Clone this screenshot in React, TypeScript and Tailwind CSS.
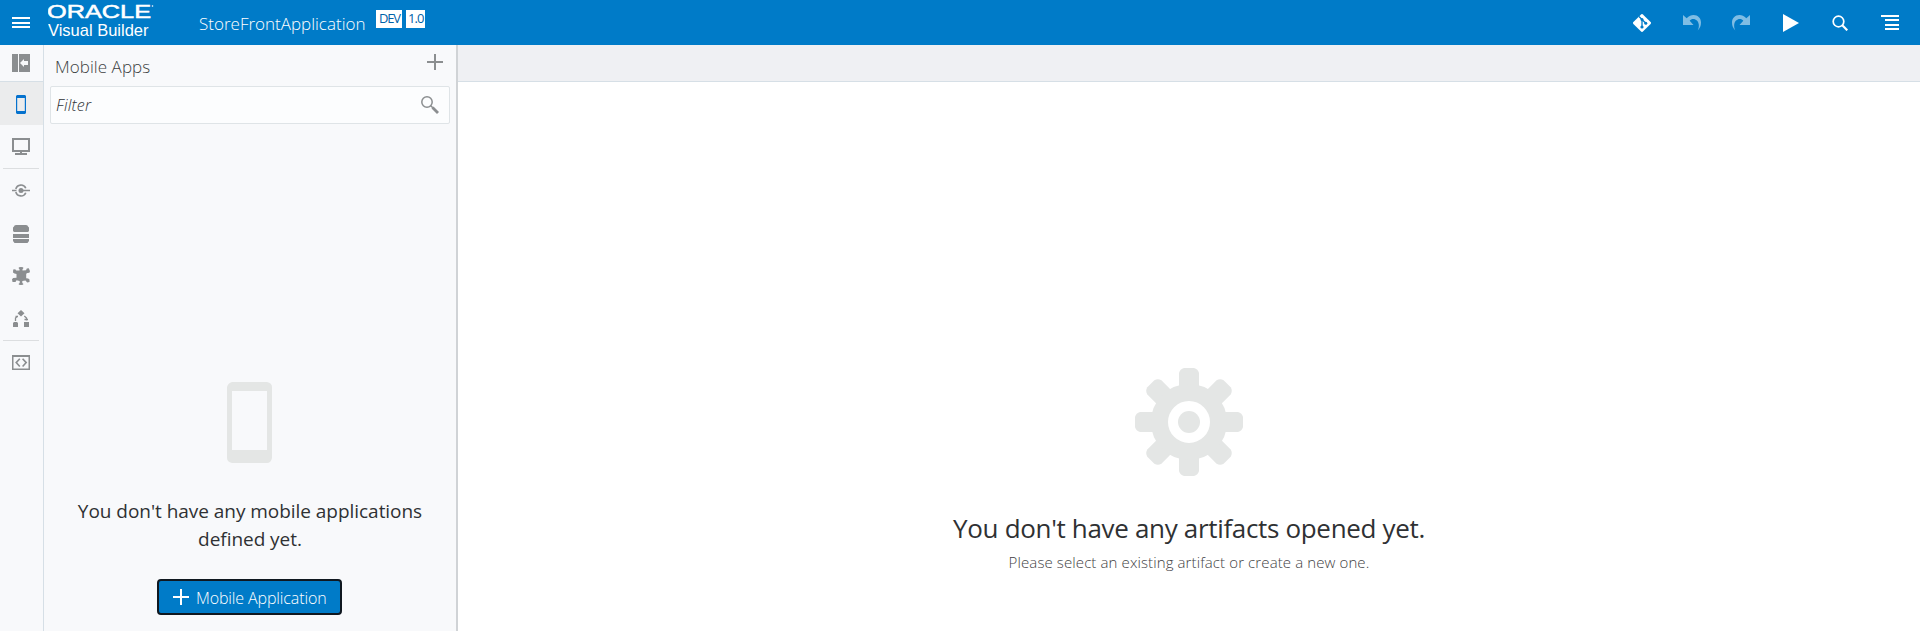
import React, { ReactNode } from "react";

function Icon({ w = 18, h = 18, className = "", children }: { w?: number; h?: number; className?: string; children: ReactNode }) {
  return (
    <svg width={w} height={h} viewBox={`0 0 ${w} ${h}`} fill="currentColor" className={`block shrink-0 ${className}`} aria-hidden="true">
      {children}
    </svg>
  );
}

const stroke = { fill: "none", stroke: "currentColor" };

function Logo() {
  return (
    <svg width="110" height="36" viewBox="0 0 110 36" className="ml-[18px] mt-[2px] block shrink-0 font-['Liberation_Sans',Arial,sans-serif]" fill="#fff">
      <text x="-1" y="16" fontSize="17.5" stroke="#fff" strokeWidth="0.5" textLength="104" lengthAdjust="spacingAndGlyphs">ORACLE</text>
      <circle cx="104.5" cy="4" r="0.8" />
      <text x="0" y="33.500" fontSize="17" textLength="100.500" lengthAdjust="spacingAndGlyphs">Visual Builder</text>
    </svg>
  );
}

function Plus({ size, className = "" }: { size: number; className?: string }) {
  return (
    <Icon w={size} h={size} className={className}>
      <path d={`M${size / 2 - 1} 0h2v${size}h-2zM0 ${size / 2 - 1}h${size}v2H0z`} />
    </Icon>
  );
}

function UndoIcon() {
  return (
    <Icon h={16} className="text-[#7fbde4]">
      <path d="M0 0L3.7 3.2C6 .9 8.200 0 10.500 0C15 0 18 3.300 18 7.600C18 11 16.800 13.500 14.700 15.500C15.700 13.500 16 11.500 15.800 9.600C15.400 6.200 13 4 10.200 4C8.700 4 7.600 4.600 6.700 5.800L10.500 10H0z" />
    </Icon>
  );
}

function HeaderBar() {
  return (
    <header className="flex h-[45px] shrink-0 bg-[#007bc8] text-white">
      <button className="ml-3 mt-[17px] h-[11px]" aria-label="Menu">
        <Icon h={11}><path d="M0 0h18v2H0zM0 5h18v2H0zM0 9h18v2H0z" /></Icon>
      </button>
      <Logo />
      <div className="ml-[41px] mt-[3px] w-[165px] whitespace-nowrap text-[17px] font-light leading-[42px]">StoreFrontApplication</div>
      <div className="ml-3 mt-[10px] flex h-[18px] gap-1 text-[13px] leading-[17px] text-[#0062a8]">
        <span className="w-[26px] bg-white pl-[3px] tracking-[-1.2px]">DEV</span>
        <span className="w-[19px] bg-white pl-[2px] tracking-[-0.9px]">1.0</span>
      </div>
      <div className="ml-auto mr-[21px] flex h-[45px] items-center">
        <Icon className="mr-8">
          <path d="M8.100.4a1.300 1.300 0 0 1 1.800 0l7.700 7.700a1.300 1.300 0 0 1 0 1.800l-7.700 7.700a1.300 1.300 0 0 1-1.800 0L.4 9.900a1.300 1.300 0 0 1 0-1.800z" />
          <path d="M6 2.500L9 5.500V13M9 5.500L12.800 9.200" fill="none" stroke="#007bc8" strokeWidth="1.3" />
          <g fill="#007bc8"><circle cx="9" cy="5.400" r="1.500" /><circle cx="9" cy="13" r="1.600" /><circle cx="12.800" cy="9.200" r="1.500" /></g>
        </Icon>
        <span className="mr-[31px]"><UndoIcon /></span>
        <span className="mr-[33px] -scale-x-100"><UndoIcon /></span>
        <Icon w={16} className="mr-[33px]"><path d="M0 0l16 9L0 18z" /></Icon>
        <Icon w={16} h={16} className="mr-[33px]">
          <circle cx="6.500" cy="6.500" r="5.300" {...stroke} strokeWidth="1.700" />
          <path d="M10.300 10.300l5 5" {...stroke} strokeWidth="2.200" />
        </Icon>
        <Icon h={15}><path d="M0 0h18v2H0zM4 4h14v2H4zM4 9h14v2H4zM4 13h14v2H4z" /></Icon>
      </div>
    </header>
  );
}

function Rail() {
  return (
    <nav className="flex w-[44px] shrink-0 flex-col items-center border-r border-[#d6dfe6] bg-[#f8f9fb] text-[#8b8e90]">
      <div className="flex h-[37px] w-full justify-center border-b border-[#d6dfe6] pr-px pt-[9px]">
        <Icon><path fillRule="evenodd" d="M0 0h6v18H0zM7 0h11v18H7zM8 9l4-4v2h4v4h-4v2z" /></Icon>
      </div>
      <div className="flex h-[43px] w-full items-start justify-center bg-[#ebeced] pr-px pt-[13px] text-[#0572ce]">
        <Icon w={10} h={19}><path fillRule="evenodd" d="M1 0h8l1 1v17l-1 1H1l-1-1V1zM1.200 3v13h7.600V3z" /></Icon>
      </div>
      <div className="flex h-[43px] w-full justify-center pr-px pt-[13px]">
        <Icon h={17}><path fillRule="evenodd" d="M0 0h18v14H0zM2 2v10h14V2zM8 14h2v1h5v2H3v-2h5z" /></Icon>
      </div>
      <div className="mr-px h-px w-9 shrink-0 bg-[#dcdee0]" />
      <div className="flex h-[42px] w-full items-start justify-center pr-px pt-[15px]">
        <Icon h={13}>
          <path d="M13.800 4.300A5.300 5.300 0 0 0 3.800 5M3.800 8A5.300 5.300 0 0 0 13.800 8.700" {...stroke} strokeWidth="1.600" />
          <circle cx="9" cy="6.500" r="2.500" /><path d="M0 5.800h4.500v1.400H0zM9 5.800h9v1.400H9z" />
        </Icon>
      </div>
      <div className="flex h-[43px] w-full items-start justify-center pr-px pt-[14px]">
        <Icon w={16}><path d="M1 1.500Q1 0 3 0h10q2 0 2 1.500l1 1V6l-1 1H1L0 6V2.500zM0 9h16v4H0zM0 14h16v2l-1.500 2h-13L0 16z" /></Icon>
      </div>
      <div className="flex h-[43px] w-full items-start justify-center pr-px pt-[13px]">
        <Icon><path d="M6.500 1Q6.500 0 9 0t2.500 1L10.500 2.300V3.500L14 3.200l.8-1.700 2-.3 1.200 3-.6 1.600-2 .2-1.200.8v4.400l2 .2 1.300 1V15l-2.300.5L13.500 13.500 10.300 14v2l1.200 1q0 1-2.500 1t-2.500-1L7.700 16v-2L4.500 13.300 3.500 15H.5L0 12.200 1.200 11l3.300-.2V7L2.500 6.500 1 5.500 1.200 2.500l2-.3L4.200 3.500H7.500V2.300z" /></Icon>
      </div>
      <div className="flex h-[43px] w-full items-start justify-center pr-px pt-[13px]">
        <Icon w={16} h={17}>
          <path d="M8 0l3.500 3.300L8 6.600 4.500 3.300zM11 12h5v5h-5zM1 12h3l1 1v4H0v-4z" />
          <path d="M2.500 11V8L4.700 6M2.500 6.500h2.500M11.300 6l2.200 2v2.500M11.500 9.500h3.500" {...stroke} strokeWidth="1.300" />
        </Icon>
      </div>
      <div className="mr-px h-px w-9 shrink-0 bg-[#dcdee0]" />
      <div className="flex w-full justify-center pr-px pt-[14px]">
        <Icon h={15}>
          <path fillRule="evenodd" d="M0 0h18v15H0zM1.500 2v11.500h15V2z" />
          <path d="M7.800 3.700L4.200 7.600l3.600 3.900M10.600 3.700l3.600 3.900-3.600 3.900" {...stroke} strokeWidth="1.600" />
        </Icon>
      </div>
    </nav>
  );
}

function MobilePanel() {
  return (
    <aside className="flex w-[414px] shrink-0 flex-col border-r-2 border-[#d0d3d6] bg-[#f8f9fb]">
      <div className="flex h-[41px] shrink-0 justify-between pl-[11px] pr-[13px]">
        <h2 className="pt-[3px] text-[17px] font-light leading-[38px] tracking-[0.06px] text-[#3c3f42]">Mobile Apps</h2>
        <Plus size={16} className="mt-[9px] text-[#8b8e90]" />
      </div>
      <div className="ml-[6px] flex h-[38px] w-[400px] shrink-0 items-center justify-between rounded-[2px] border border-[#dfe4e7] bg-[#fcfdfe] pl-[5px] pr-[10px]">
        <span className="text-[16px] font-light italic tracking-[0.2px] text-[#303336]">Filter</span>
        <Icon className="text-[#8b8e90]">
          <circle cx="6" cy="6" r="5.200" {...stroke} strokeWidth="1.500" />
          <path d="M9.800 9.800l2 2" {...stroke} strokeWidth="1.500" />
          <path d="M11.500 11.500l5.500 5.500" {...stroke} strokeWidth="2.800" />
        </Icon>
      </div>
      <div className="flex flex-col items-center pt-[258px]">
        <Icon w={45} h={81} className="mr-px text-[#e4e6e5]">
          <path fillRule="evenodd" d="M5 0h35q5 1 5 5v71q-1 5-5 5H5q-5-1-5-5V5q1-4 5-5zM5 9v59h35V9z" />
        </Icon>
        <p className="mt-[34px] text-center text-[19px] leading-7 tracking-[-0.04px] text-[#2f3133]">
          You don't have any mobile applications<br />defined yet.
        </p>
        <button className="mr-px mt-[26px] flex h-[36px] w-[185px] items-center rounded-[4px] border-2 border-[#101820] bg-[#007bc8] pl-[14px] text-white">
          <Plus size={16} />
          <span className="ml-[7px] whitespace-nowrap pt-[2px] text-[16px] font-light leading-[30px] tracking-[-0.12px]">Mobile Application</span>
        </button>
      </div>
    </aside>
  );
}

const teeth = [0, 45, 90, 135, 180, 225, 270, 315];

function Workspace() {
  return (
    <main className="flex flex-1 flex-col bg-white">
      <div className="h-[37px] shrink-0 border-b border-[#d6dfe6] bg-[#eff0f3]" />
      <div className="flex flex-col items-center pt-[286px]">
        <Icon w={108} h={108} className="text-[#e4e6e5]">
          {teeth.map((a) => (
            <path key={a} d="M44 26V5q1-4 5-5h10q4 1 5 5v21z" transform={`rotate(${a} 54 54)`} />
          ))}
          <circle cx="54" cy="54" r="29.500" fill="none" stroke="currentColor" strokeWidth="17" />
          <circle cx="54" cy="54" r="11" />
        </Icon>
        <h1 className="mt-[32px] text-[26px] leading-10 tracking-[-0.33px] text-[#2f3133]">You don't have any artifacts opened yet.</h1>
        <p className="mt-[2px] text-[15px] font-light leading-6 tracking-[0.11px] text-[#3f4244]">Please select an existing artifact or create a new one.</p>
      </div>
    </main>
  );
}

export default function App() {
  return (
    <div className="flex h-[631px] w-full flex-col overflow-hidden bg-white font-['Open_Sans','Noto_Sans',sans-serif]">
      <HeaderBar />
      <div className="flex min-h-0 flex-1">
        <Rail />
        <MobilePanel />
        <Workspace />
      </div>
    </div>
  );
}
